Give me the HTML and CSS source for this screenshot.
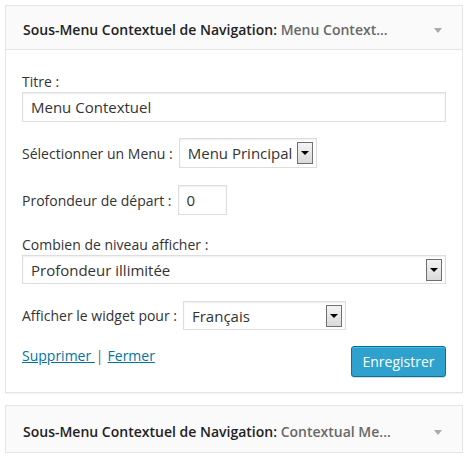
FILE: index.html
```html
<!DOCTYPE html>
<html lang="fr">
<head>
<meta charset="utf-8">
<title>Widgets</title>
<link rel="stylesheet" href="styles.css">
</head>
<body>
<div class="widgets">
  <div class="widget">
    <div class="widget-top">
      <h4 class="widget-title">Sous-Menu Contextuel de Navigation:<span class="in-title"> Menu Context...</span></h4>
      <span class="toggle"></span>
    </div>
    <div class="widget-inside">
      <div class="field field-stack">
        <label class="label">Titre :</label>
        <div class="input input-full">Menu Contextuel</div>
      </div>
      <div class="field field-row">
        <label class="label">Sélectionner un Menu :</label>
        <div class="select select-menu"><span class="select-text">Menu Principal</span><span class="select-btn"></span></div>
      </div>
      <div class="field field-row">
        <label class="label">Profondeur de départ :</label>
        <div class="input input-small">0</div>
      </div>
      <div class="field field-stack field-gap">
        <label class="label">Combien de niveau afficher :</label>
        <div class="select select-full select-short"><span class="select-text">Profondeur illimitée</span><span class="select-btn"></span></div>
      </div>
      <div class="field field-row">
        <label class="label">Afficher le widget pour :</label>
        <div class="select select-lang select-short"><span class="select-text">Français</span><span class="select-btn"></span></div>
      </div>
      <div class="actions">
        <div class="links"><a href="#" class="link">Supprimer </a><span class="sep">|</span><a href="#" class="link">Fermer</a></div>
        <button class="button-primary">Enregistrer</button>
      </div>
    </div>
  </div>
  <div class="widget">
    <div class="widget-top">
      <h4 class="widget-title">Sous-Menu Contextuel de Navigation:<span class="in-title"> Contextual Me...</span></h4>
      <span class="toggle"></span>
    </div>
  </div>
</div>
</body>
</html>
```

FILE: styles.css
```css
html, body {
  margin: 0;
  padding: 0;
  background: #fff;
}
body {
  font-family: "Open Sans", sans-serif;
  font-size: 14px;
  color: #444;
}
.widgets {
  padding: 5px 4px 0 5px;
  display: flex;
  flex-direction: column;
  gap: 12px;
}
.widget {
  border: 1px solid #e5e5e5;
  background: #fff;
  box-shadow: 0 1px 1px rgba(0,0,0,.04);
}
.widget-top {
  height: 43px;
  background: #fafafa;
  display: flex;
  align-items: center;
  padding: 0 20px 0 17px;
}
.widget + .widget .widget-top {
  height: 46px;
}
.widget-title {
  margin: 0;
  padding-top: 4px;
  flex: 1;
  font-size: 14px;
  font-weight: 600;
  color: #222;
  white-space: nowrap;
}
.in-title {
  font-weight: 600;
  color: #686868;
}
.toggle {
  width: 0;
  height: 0;
  border-left: 4px solid transparent;
  border-right: 4px solid transparent;
  border-top: 5px solid #aaa;
  margin-top: 6px;
}
.widget-inside {
  border-top: 1px solid #e5e5e5;
  padding: 21px 16px 15px 16px;
}
.field-stack {
  display: flex;
  flex-direction: column;
}
.field-stack .label {
  line-height: 21px;
}
.field-row {
  display: flex;
  align-items: center;
  gap: 6px;
  margin-top: 16px;
}
.field-row + .field-row {
  margin-top: 17px;
}
.field-gap {
  margin-top: 19px;
}
.field-gap + .field-row {
  margin-top: 17px;
}
.label {
  color: #333;
}
.input, .select {
  box-sizing: border-box;
  height: 30px;
  border: 1px solid #ddd;
  box-shadow: inset 0 1px 2px rgba(0,0,0,.07);
  background: #fff;
  font-size: 15px;
  color: #333;
  display: flex;
  align-items: center;
}
.input {
  padding: 0 8px;
}
.input-full {
  width: 100%;
}
.input-small {
  width: 49px;
}
.select {
  padding: 0 3px 0 8px;
  justify-content: space-between;
}
.select-short {
  height: 29px;
}
.select-menu {
  width: 138px;
}
.select-full {
  width: 100%;
}
.select-lang {
  width: 163px;
}
.select-btn {
  box-sizing: border-box;
  width: 16px;
  height: 22px;
  border: 1px solid #707070;
  background: linear-gradient(#f4f4f4, #dadada);
  position: relative;
  flex-shrink: 0;
}
.select-btn::after {
  content: "";
  position: absolute;
  left: 3px;
  top: 8px;
  border-left: 4px solid transparent;
  border-right: 4px solid transparent;
  border-top: 4px solid #000;
}
.actions {
  display: flex;
  justify-content: space-between;
  align-items: flex-start;
  margin-top: 16px;
}
.links {
  line-height: 20px;
  padding-top: 0;
  color: #666;
}
.link {
  color: #0074a2;
  text-decoration: underline;
}
.sep {
  margin: 0 4px 0 1px;
}
.button-primary {
  box-sizing: border-box;
  height: 31px;
  width: 95px;
  background: #2ea2cc;
  border: 1px solid #0074a2;
  border-radius: 3px;
  box-shadow: inset 0 1px 0 rgba(120,200,230,.5), 0 1px 0 rgba(0,0,0,.15);
  color: #fff;
  font-family: "Open Sans", sans-serif;
  font-size: 14px;
  padding: 0;
}
```
